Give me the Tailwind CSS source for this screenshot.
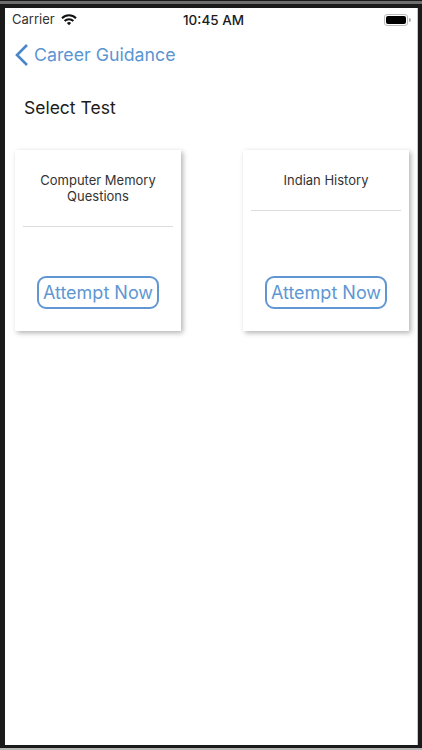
<!DOCTYPE html>
<html>
<head>
<meta charset="utf-8">
<script src="https://cdn.jsdelivr.net/npm/@tailwindcss/browser@4"></script>
</head>
<body class="bg-[#1a1a1a]">
<div class="w-[422px] h-[750px] overflow-hidden flex flex-col bg-[#1a1a1a] font-['Inter',sans-serif]">
  <div class="h-[3px] mt-px bg-[#6e6e6e] shrink-0"></div>
  <div class="flex-1 min-h-0 ml-[5px] mr-[4px] mt-1 mb-[3px] bg-white border-r border-[#c8c8c8] flex flex-col">
    <div class="h-[24px] relative flex items-center pl-[7px] pr-[6px] justify-between text-[13px] text-[#222] shrink-0">
      <div class="flex items-center gap-[6px]">
        <span class="text-[#333]">Carrier</span>
        <svg width="16" height="12" viewBox="0 0 16 12" fill="none" stroke="#111" stroke-width="2"><path d="M1 4.2a10 10 0 0 1 14 0"/><path d="M3.6 7a6.2 6.2 0 0 1 8.8 0"/><path d="M8 11.2 5.9 9.1a3 3 0 0 1 4.2 0Z" fill="#111" stroke="none"/></svg>
      </div>
      <span class="absolute left-[178px] top-[2px] font-medium text-[13.5px] text-[#1c1c1c]">10:45 AM</span>
      <div class="flex items-center gap-px">
        <div class="w-[24px] h-[12px] rounded-[3px] border border-[#bbb] p-px"><div class="w-full h-full bg-black rounded-[2px]"></div></div>
        <div class="w-[2px] h-[4px] bg-[#aaa] rounded-r-sm"></div>
      </div>
    </div>
    <div class="h-[38px] mt-[4px] flex items-center pl-[9px] gap-[5px] text-[#5b95d2] shrink-0">
      <svg width="15" height="24" viewBox="0 0 15 24" fill="none" stroke="#4a86cb" stroke-width="2.6"><path d="M13 2 3 12l10 10"/></svg>
      <span class="text-[17.75px]">Career Guidance</span>
    </div>
    <div class="pl-[19px] mt-[22px] text-[17.5px] leading-[24px] text-[#1c1c1c] shrink-0">Select Test</div>
    <div class="flex justify-between pl-[10px] pr-[8px] mt-[30px]">
      <div class="w-[166px] h-[181px] bg-white shadow-[2px_2px_5px_rgba(0,0,0,0.3)] flex flex-col px-[8px]">
        <div class="pt-[22px] pb-[22px] text-[13px] leading-[16px] text-center text-[#333] border-b border-[#dcdcdc]">Computer Memory<br>Questions</div>
        <div class="mt-auto mb-[22px] self-center w-[122px] h-[33px] rounded-[9px] border-2 border-[#6097d2] text-[#6097d2] text-[18px] whitespace-nowrap flex items-center justify-center">Attempt Now</div>
      </div>
      <div class="w-[166px] h-[181px] bg-white shadow-[2px_2px_5px_rgba(0,0,0,0.3)] flex flex-col px-[8px]">
        <div class="pt-[22px] pb-[22px] text-[13px] leading-[16px] text-center text-[#333] border-b border-[#dcdcdc]">Indian History</div>
        <div class="mt-auto mb-[22px] self-center w-[122px] h-[33px] rounded-[9px] border-2 border-[#6097d2] text-[#6097d2] text-[18px] whitespace-nowrap flex items-center justify-center">Attempt Now</div>
      </div>
    </div>
  </div>
  <div class="h-[2px] bg-[#b5b5b5] shrink-0"></div>
</div>
</body>
</html>
